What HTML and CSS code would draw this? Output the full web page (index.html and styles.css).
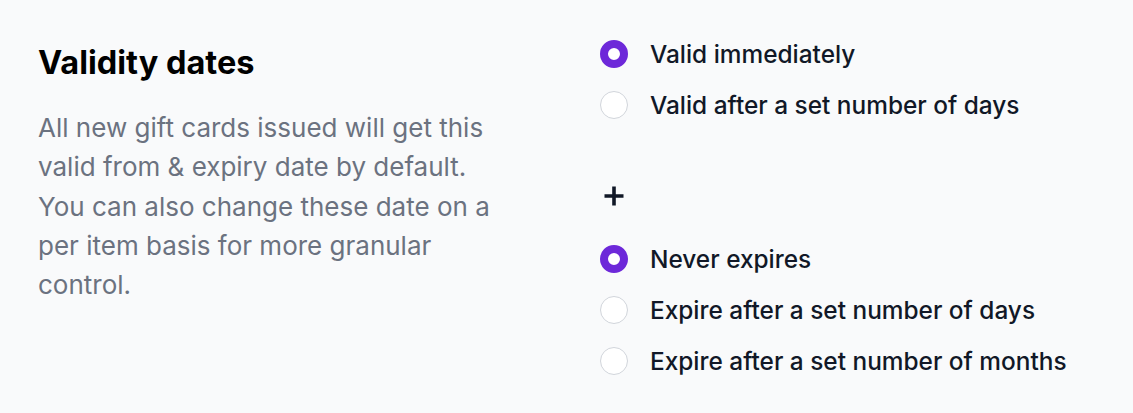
FILE: index.html
```html
<!DOCTYPE html>
<html lang="en">
<head>
<meta charset="utf-8">
<title>Validity dates</title>
<link rel="stylesheet" href="styles.css">
</head>
<body>
<main class="section">
  <div class="intro">
    <h2 class="title">Validity dates</h2>
    <p class="desc">All new gift cards issued will get this valid from &amp; expiry date by default. You can also change these date on a per item basis for more granular control.</p>
  </div>
  <div class="options">
    <div class="group">
      <label class="option"><input type="radio" name="valid" class="radio" checked><span>Valid immediately</span></label>
      <label class="option"><input type="radio" name="valid" class="radio"><span>Valid after a set number of days</span></label>
    </div>
    <div class="plus">
      <svg width="22" height="22" viewBox="0 0 22 22"><path d="M11 1.5v19M1.5 11h19" stroke="#111827" stroke-width="3.6" fill="none"/></svg>
    </div>
    <div class="group">
      <label class="option"><input type="radio" name="expiry" class="radio" checked><span>Never expires</span></label>
      <label class="option"><input type="radio" name="expiry" class="radio"><span>Expire after a set number of days</span></label>
      <label class="option"><input type="radio" name="expiry" class="radio"><span>Expire after a set number of months</span></label>
    </div>
  </div>
</main>
</body>
</html>
```
FILE: styles.css
```css
* { box-sizing: border-box; }
html, body { margin: 0; padding: 0; background: #f9fafb; }
body { font-family: Inter, "Noto Sans", sans-serif; color: #111827; }
.section {
  display: grid;
  grid-template-columns: 562px 1fr;
  padding: 28px 0 0 38px;
  height: 413px;
}
.intro { padding-top: 15px; }
.title {
  margin: 0;
  font-size: 32.5px;
  line-height: 40px;
  font-weight: 700;
  color: #000;
  letter-spacing: 0;
}
.desc {
  margin: 25px 0 0;
  max-width: 470px;
  font-size: 26px;
  line-height: 39.25px;
  color: #6b7280;
}
.options { display: flex; flex-direction: column; }
.group { display: flex; flex-direction: column; }
.option {
  display: flex;
  align-items: center;
  gap: 22px;
  height: 51px;
  font-size: 24.4px;
  font-weight: 500;
  color: #111827;
  cursor: pointer;
}
.radio {
  appearance: none;
  -webkit-appearance: none;
  margin: 0;
  width: 28px;
  height: 28px;
  border-radius: 50%;
  border: 1px solid #d1d5db;
  background: #fff;
  flex: none;
}
.radio:checked {
  border: 8px solid #6d28d9;
  background: #fff;
}
.plus {
  display: flex;
  align-items: center;
  height: 22px;
  margin: 55px 0 26px 3px;
}
```
